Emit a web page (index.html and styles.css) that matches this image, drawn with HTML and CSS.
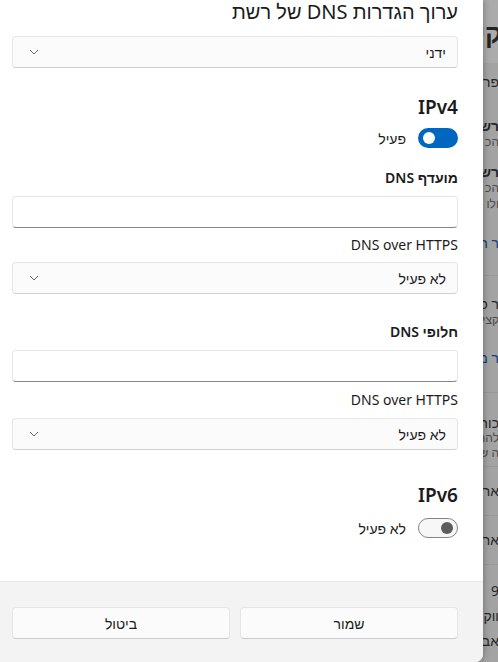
FILE: index.html
```html
<!DOCTYPE html>
<html lang="he">
<head>
<meta charset="utf-8">
<title>ערוך הגדרות DNS של רשת</title>
<link rel="stylesheet" href="styles.css">
</head>
<body>
<div class="screen">
  <div class="dialog" dir="rtl">
    <div class="content">
      <h1 class="title">ערוך הגדרות DNS של רשת</h1>
      <div class="select first"><span>ידני</span><svg class="chev" width="10" height="6" viewBox="0 0 10 6"><polyline points="1,1 5,5 9,1" fill="none" stroke="#6b6b6b" stroke-width="1"/></svg></div>

      <h2 class="section">IPv4</h2>
      <div class="toggle-row"><span class="toggle on"><span class="knob"></span></span><span>פעיל</span></div>

      <div class="label strong gap-lg">מועדף DNS</div>
      <div class="input"></div>
      <div class="label gap-sm">DNS over HTTPS</div>
      <div class="select gap-sm"><span>לא פעיל</span><svg class="chev" width="10" height="6" viewBox="0 0 10 6"><polyline points="1,1 5,5 9,1" fill="none" stroke="#6b6b6b" stroke-width="1"/></svg></div>

      <div class="label strong gap-xl">חלופי DNS</div>
      <div class="input"></div>
      <div class="label gap-md">DNS over HTTPS</div>
      <div class="select gap-md"><span>לא פעיל</span><svg class="chev" width="10" height="6" viewBox="0 0 10 6"><polyline points="1,1 5,5 9,1" fill="none" stroke="#6b6b6b" stroke-width="1"/></svg></div>

      <h2 class="section v6">IPv6</h2>
      <div class="toggle-row v6"><span class="toggle off"><span class="knob"></span></span><span>לא פעיל</span></div>
    </div>
    <div class="footer">
      <button class="btn">שמור</button>
      <button class="btn">ביטול</button>
    </div>
  </div>

  <div class="backdrop" dir="rtl">
    <div class="bd-band"><span class="bd-big">קי</span></div>
    <div class="bd-line bd-sub">פרו</div>
    <div class="bd-group g1">
      <div class="bd-line bd-bold">רש</div>
      <div class="bd-line bd-sec">הכ</div>
      <div class="bd-line bd-bold bd-next">רש</div>
      <div class="bd-line bd-sec">הכ</div>
      <div class="bd-line bd-sec">ולו</div>
      <div class="bd-line bd-link">ר ה</div>
    </div>
    <div class="bd-divider d1"></div>
    <div class="bd-group g2">
      <div class="bd-line">ר כ</div>
      <div class="bd-line bd-sec">קצי</div>
      <div class="bd-line bd-link">ר מ</div>
    </div>
    <div class="bd-divider d2"></div>
    <div class="bd-group g3">
      <div class="bd-line">כות</div>
      <div class="bd-line bd-sec">להת</div>
      <div class="bd-line bd-sec">ה ש</div>
    </div>
    <div class="bd-divider d3"></div>
    <div class="bd-row">אר</div>
    <div class="bd-divider"></div>
    <div class="bd-row">אר</div>
    <div class="bd-divider"></div>
    <div class="bd-group g4">
      <div class="bd-line">9</div>
      <div class="bd-line">ווק</div>
      <div class="bd-line">אבי</div>
    </div>
  </div>
</div>
</body>
</html>
```

FILE: styles.css
```css
html, body {
  margin: 0;
  padding: 0;
}

body {
  width: 498px;
  height: 662px;
  overflow: hidden;
  background: #a3a3a3;
  font-family: "Segoe UI", "Noto Sans", "Liberation Sans", "DejaVu Sans", sans-serif;
  color: #1b1b1b;
}

.screen {
  display: grid;
  grid-template-columns: 483px 15px;
  height: 662px;
}

/* ---------- dialog ---------- */
.dialog {
  position: relative;
  z-index: 1;
  background: #ffffff;
  border-bottom-right-radius: 8px;
  box-shadow: 1px 0 6px rgba(0, 0, 0, 0.28);
  display: flex;
  flex-direction: column;
  overflow: hidden;
}

.content {
  flex: 1;
  padding: 0 25px 0 12px;
}

.title {
  margin: 0;
  font-size: 20px;
  line-height: 24px;
  font-weight: 400;
}

.select {
  box-sizing: border-box;
  height: 32px;
  border: 1px solid #e6e6e6;
  border-bottom-color: #d0d0d0;
  border-radius: 4px;
  background: #fbfbfb;
  display: flex;
  align-items: center;
  justify-content: space-between;
  padding: 0 11px 0 16px;
  font-size: 14px;
}

.select.first { margin-top: 12px; }

.chev { display: block; }

.input {
  box-sizing: border-box;
  height: 32px;
  margin-top: 8px;
  border: 1px solid #e6e6e6;
  border-bottom: 1px solid #878787;
  border-radius: 4px;
  background: #ffffff;
}

.section {
  margin: 25px 0 0;
  font-size: 19px;
  line-height: 28px;
  font-weight: 600;
}

.section.v6 { margin-top: 31px; }

.toggle-row {
  margin-top: 7px;
  height: 20px;
  display: flex;
  align-items: center;
  gap: 12px;
  font-size: 14px;
}

.toggle-row.v6 { margin-top: 9px; }

.toggle {
  box-sizing: border-box;
  width: 40px;
  height: 20px;
  border-radius: 10px;
  display: flex;
  align-items: center;
}

.toggle .knob {
  width: 12px;
  height: 12px;
  border-radius: 50%;
}

.toggle.on {
  background: #0067c0;
  justify-content: flex-end;
  padding: 0 5px;
}

.toggle.on .knob { background: #ffffff; }

.toggle.off {
  border: 1px solid #858585;
  background: #f7f7f7;
  justify-content: flex-start;
  padding: 0 4px;
}

.toggle.off .knob { background: #5d5d5d; }

.label {
  font-size: 14px;
  line-height: 20px;
}

.label.strong { font-weight: 600; }

.gap-sm { margin-top: 7px; }
.gap-md { margin-top: 8px; }
.gap-lg { margin-top: 20px; }
.gap-xl { margin-top: 28px; }

.footer {
  height: 81px;
  box-sizing: border-box;
  border-top: 1px solid #e5e5e5;
  background: #f3f3f3;
  padding: 25px 25px 0 12px;
  display: grid;
  grid-template-columns: 1fr 1fr;
  column-gap: 10px;
  align-items: start;
}

.btn {
  height: 32px;
  border: 1px solid #e5e5e5;
  border-bottom-color: #cccccc;
  border-radius: 4px;
  background: #fbfbfb;
  font-family: inherit;
  font-size: 14px;
  color: #1b1b1b;
}

/* ---------- dimmed page behind ---------- */
.backdrop {
  overflow: hidden;
  white-space: nowrap;
  font-size: 14px;
  color: #262626;
}

.bd-band {
  height: 63px;
  background: #ababab;
  line-height: 66px;
  margin-right: -4px;
}

.bd-big {
  font-size: 26px;
  font-weight: 600;
  color: #242424;
}

.bd-line {
  height: 16px;
  line-height: 16px;
  margin-right: -1px;
}

.bd-sub { margin-top: 11px; }

.bd-bold { font-weight: 600; }

.bd-sec {
  font-size: 12px;
  color: #4a4a4a;
}

.bd-link {
  color: #16407a;
  margin-top: 23px;
}

.bd-next { margin-top: 14px; }

.g1 { margin-top: 28px; }

.bd-divider {
  height: 1px;
  background: #989898;
  margin-top: 24px;
}

.g2 { margin-top: 20px; }
.g2 .bd-link { margin-top: 22px; }

.d2 { margin-top: 26px; }

.g3 { margin-top: 22px; }
.g3 .bd-line { height: 15px; line-height: 15px; }

.d3 { margin-top: 6px; }

.bd-row {
  height: 48px;
  line-height: 48px;
  margin-right: -1px;
}

.bd-row + .bd-divider { margin-top: 0; }

.g4 { margin-top: 13px; }
.g4 .bd-line { height: 25px; line-height: 25px; }
```
